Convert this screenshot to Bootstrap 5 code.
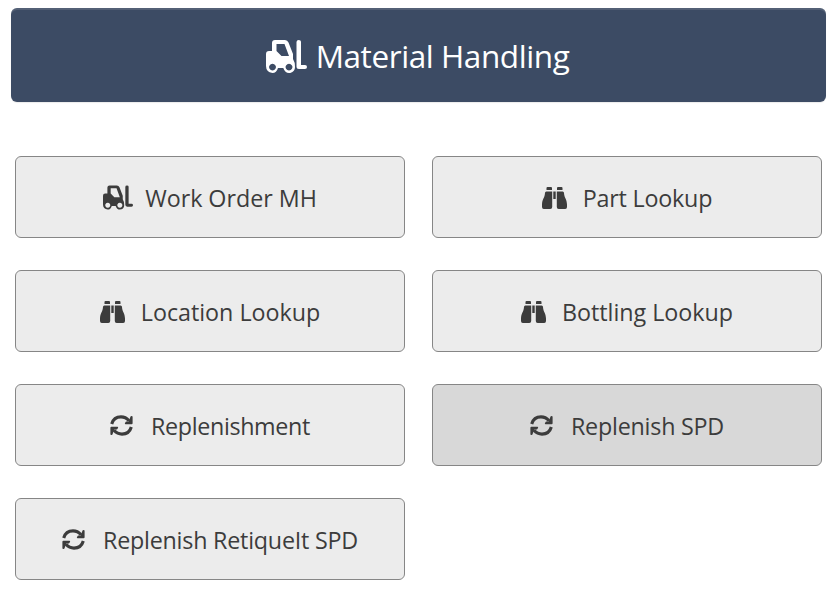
<!DOCTYPE html>
<html lang="en">
<head>
<meta charset="utf-8">
<meta name="viewport" content="width=device-width, initial-scale=1">
<title>Material Handling</title>
<link href="https://cdn.jsdelivr.net/npm/bootstrap@5.3.0/dist/css/bootstrap.min.css" rel="stylesheet">
<style>
body{font-family:"Segoe UI","Open Sans","Noto Sans",sans-serif;background:#fff}
.page{padding:8px 10px 0 11px}
.banner{height:94px;background:#3c4b64;color:#fff;border-radius:6px;font-size:31.5px;line-height:48px;letter-spacing:-.42px;box-shadow:inset 0 2px 0 rgba(255,255,255,.12),0 1px 1px rgba(0,0,0,.08);padding:2px 2px 0 0}
.banner svg{margin-right:9px}
.menu{margin-top:54px;padding:0 4px;row-gap:32px;display:grid;grid-template-columns:390px 390px;column-gap:27px}
.menu .btn{height:82px;background:#ececec;border:1px solid #868686;border-radius:6px;color:#3c3c3c;font-size:23.3px;line-height:36px;letter-spacing:-.03px;padding:1px 0 0}
.menu .btn.tight{letter-spacing:-.22px}
.menu .btn.tighter{letter-spacing:-.36px}
.menu .btn.current{background:#d8d8d8}
.menu svg{margin-right:16px}
.menu .sync{margin-right:18px}
.menu .lift{margin-right:12px}
svg{display:block;fill:currentColor;flex:none}
</style>
</head>
<body>
<svg class="d-none" xmlns="http://www.w3.org/2000/svg">
<symbol id="lift" viewBox="0 0 41 33"><path fill-rule="evenodd" d="M6 11V3Q6 0 9 0H19Q21.500 0 22.500 2.500L27 14V19Q29 22 29 27C29 30.500 26.500 33 23 33Q19 33 17.300 28H12Q10.500 33 6.500 33Q0 32 0 26V14Q0 11 3 11ZM10.500 4V11L15.500 16H23L18.500 4ZM6.500 23.700a3.400 3.400 0 1 0 .01 0ZM23 23.700a3.400 3.400 0 1 0 .01 0ZM30.500 2Q30.500 0 32.800 0T35 2V25H39Q41 25 41 27T39 29H33Q30.500 29 30.500 26.500Z"/></symbol>
<symbol id="bino" viewBox="0 0 25 22"><path d="M5.500 0H9Q10 0 10 1V3H4.500V1Q4.500 0 5.500 0ZM16 0H19.500Q20.500 0 20.500 1V3H15V1Q15 0 16 0ZM4.300 4.500H10.200V20Q10.200 22 8.300 22H1.800Q0 22 0 20V17.500C.2 12 2.700 11 3 6Q3 4.500 4.300 4.500ZM14.800 4.500H20.700Q22 4.500 22 6C22.300 11 24.800 12 25 17.500V20Q25 22 23.200 22H16.700Q14.800 22 14.800 20ZM11.300 4.500H13.700V12H11.300Z"/></symbol>
<symbol id="sync" viewBox="0 0 23 21"><g id="half"><path fill="none" stroke="currentColor" stroke-width="3.100" d="M1.700 9C3 4.500 6.800 1.900 11 1.900C14.300 1.900 16.800 3.200 19 5.700"/><path d="M20.700 1.300Q22.600 .4 22.600 2V8.300Q22.600 9.300 21.600 9.300H15.800Q14.300 9.300 15 7.900L16 6.600H18.600Z"/></g><use href="#half" transform="rotate(180 11.5 10.500)"/></symbol>
</svg>
<main class="page">
<header class="banner d-flex align-items-center justify-content-center"><svg class="lift" width="41" height="33"><use href="#lift"/></svg><span>Material Handling</span></header>
<div class="menu">
<a href="#" class="btn d-flex align-items-center justify-content-center"><svg class="lift" width="30" height="25"><use href="#lift"/></svg><span>Work Order MH</span></a>
<a href="#" class="btn tight d-flex align-items-center justify-content-center"><svg width="25" height="22"><use href="#bino"/></svg><span>Part Lookup</span></a>
<a href="#" class="btn d-flex align-items-center justify-content-center"><svg width="25" height="22"><use href="#bino"/></svg><span>Location Lookup</span></a>
<a href="#" class="btn d-flex align-items-center justify-content-center"><svg width="25" height="22"><use href="#bino"/></svg><span>Bottling Lookup</span></a>
<a href="#" class="btn tighter d-flex align-items-center justify-content-center"><svg class="sync" width="23" height="21"><use href="#sync"/></svg><span>Replenishment</span></a>
<a href="#" class="btn current tight d-flex align-items-center justify-content-center"><svg class="sync" width="23" height="21"><use href="#sync"/></svg><span>Replenish SPD</span></a>
<a href="#" class="btn tight d-flex align-items-center justify-content-center"><svg class="sync" width="23" height="21"><use href="#sync"/></svg><span>Replenish RetiqueIt SPD</span></a>
</div>
</main>
<script src="https://cdn.jsdelivr.net/npm/bootstrap@5.3.0/dist/js/bootstrap.bundle.min.js"></script>
</body>
</html>
